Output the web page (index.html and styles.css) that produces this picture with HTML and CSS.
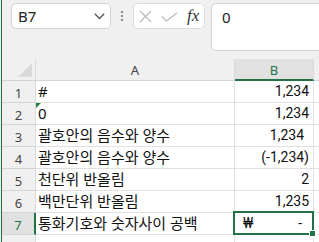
FILE: index.html
```html
<!DOCTYPE html>
<html lang="ko">
<head>
<meta charset="utf-8">
<link rel="stylesheet" href="styles.css">
</head>
<body>
<div class="frame">
  <div class="toolbar">
    <div class="namebox">
      <span class="ref">B7</span>
      <svg class="chev" width="11" height="7" viewBox="0 0 11 7"><polyline points="0.8,0.8 5.5,5.5 10.2,0.8" fill="none" stroke="#505050" stroke-width="1.3"/></svg>
    </div>
    <div class="dots"><i></i><i></i><i></i></div>
    <div class="fbtns">
      <svg class="xic" width="13" height="13" viewBox="0 0 13 13"><path d="M1 1L12 12M12 1L1 12" stroke="#b9b9b9" stroke-width="1.2" fill="none"/></svg>
      <svg class="ok" width="17" height="10" viewBox="0 0 17 10"><polyline points="0.8,4.5 5.5,9 16.2,0.8" fill="none" stroke="#b9b9b9" stroke-width="1.2"/></svg>
      <span class="fx">fx</span>
    </div>
    <div class="finput">0</div>
  </div>
  <div class="sheet">
    <div class="corner"><span class="tri"></span></div>
    <div class="colh">A</div>
    <div class="colh sel">B</div>
    <div class="colh"></div>

    <div class="rowh">1</div><div class="c">#</div><div class="c num">1,234</div><div class="c"></div>
    <div class="rowh">2</div><div class="c err">0</div><div class="c num">1,234</div><div class="c"></div>
    <div class="rowh">3</div><div class="c">괄호안의 음수와 양수</div><div class="c num pad">1,234</div><div class="c"></div>
    <div class="rowh">4</div><div class="c">괄호안의 음수와 양수</div><div class="c num">(-1,234)</div><div class="c"></div>
    <div class="rowh">5</div><div class="c">천단위 반올림</div><div class="c num">2</div><div class="c"></div>
    <div class="rowh">6</div><div class="c">백만단위 반올림</div><div class="c num">1,235</div><div class="c"></div>
    <div class="rowh sel">7</div><div class="c">통화기호와 숫자사이 공백</div><div class="c acct active"><span>₩</span><span class="dash">-</span><i class="handle"></i></div><div class="c"></div>
    <div class="rowh"></div><div class="c"></div><div class="c"></div><div class="c"></div>
  </div>
</div>
</body>
</html>
```

FILE: styles.css
```css
html, body {
  margin: 0;
  padding: 0;
}
body {
  width: 319px;
  height: 242px;
  overflow: hidden;
  background: #f0f0f0;
  font-family: "Noto Sans", "Noto Sans CJK KR", sans-serif;
}
.frame {
  margin-left: 1px;
  border-left: 1px solid #1f6e43;
  height: 242px;
  overflow: hidden;
}
.toolbar {
  height: 59px;
  display: flex;
  align-items: flex-start;
  padding: 3px 0 0 9px;
  box-sizing: border-box;
}
.namebox {
  width: 100px;
  height: 26px;
  box-sizing: border-box;
  background: #fff;
  border: 1px solid #d3d3d3;
  border-radius: 5px;
  display: flex;
  align-items: center;
  justify-content: space-between;
  padding: 0 5px 0 6px;
  flex: none;
}
.ref {
  font-size: 15px;
  color: #222;
  line-height: 1;
}
.chev {
  margin-top: 1px;
}
.dots {
  flex: none;
  width: 3px;
  margin: 8px 0 0 10px;
  display: flex;
  flex-direction: column;
  gap: 2px;
}
.dots i {
  display: block;
  width: 2px;
  height: 2px;
  background: #8a8a8a;
}
.fbtns {
  flex: none;
  width: 72px;
  height: 26px;
  margin-left: 9px;
  box-sizing: border-box;
  background: #fff;
  border: 1px solid #dcdcdc;
  border-radius: 5px;
  display: flex;
  align-items: center;
  padding-left: 5px;
}
.xic { margin-top: 1px; }
.ok { margin-left: 9px; margin-top: 1px; }
.fx {
  margin-left: 9px;
  font-family: "Liberation Serif", "DejaVu Serif", serif;
  font-style: italic;
  font-size: 17px;
  color: #333;
  line-height: 1;
  margin-top: -2px;
}
.finput {
  flex: none;
  width: 140px;
  height: 48px;
  margin-left: 6px;
  box-sizing: border-box;
  background: #fff;
  border: 1px solid #d3d3d3;
  border-radius: 5px;
  font-size: 15px;
  color: #222;
  padding: 4px 0 0 10px;
  line-height: 18px;
}
.sheet {
  display: grid;
  grid-template-columns: 34px 199px 79px 40px;
  grid-auto-rows: 22px;
  background: #fff;
}
.corner, .colh, .rowh {
  background: #f0f0f0;
  box-sizing: border-box;
  border-right: 1px solid #dadada;
  border-bottom: 1px solid #d4d4d4;
  color: #444;
}
.corner {
  position: relative;
}
.tri {
  position: absolute;
  right: 3px;
  bottom: 3px;
  width: 0;
  height: 0;
  border-left: 14px solid transparent;
  border-bottom: 14px solid #d9d9d9;
}
.colh {
  font-family: "Noto Sans", sans-serif;
  font-size: 13px;
  display: flex;
  align-items: center;
  justify-content: center;
  padding-top: 1px;
}
.colh.sel {
  background: #e1e1e1;
  color: #217346;
  border-bottom: 2px solid #217346;
}
.rowh {
  font-family: "Noto Sans", sans-serif;
  font-size: 13px;
  display: flex;
  align-items: center;
  justify-content: center;
  padding-top: 2px;
}
.rowh.sel {
  background: #e1e1e1;
  color: #217346;
  border-right: 2px solid #217346;
}
.c {
  box-sizing: border-box;
  border-right: 1px solid #e1e1e1;
  border-bottom: 1px solid #e1e1e1;
  font-size: 15px;
  color: #111;
  display: flex;
  align-items: flex-end;
  padding: 0 0 1px 2px;
  line-height: 19px;
  white-space: nowrap;
  position: relative;
}
.num {
  justify-content: flex-end;
  font-family: "Roboto", sans-serif;
  font-size: 14px;
  padding: 0 4px 1px 0;
}
.num.pad {
  padding-right: 9px;
}
.err::before {
  content: "";
  position: absolute;
  left: 0;
  top: 0;
  border-top: 5px solid #1e7b3e;
  border-right: 5px solid transparent;
}
.acct {
  justify-content: space-between;
  font-family: "Roboto", sans-serif;
  font-size: 14px;
  padding: 0 11px 1px 8px;
}
.active::after {
  content: "";
  position: absolute;
  left: -2px;
  top: -2px;
  right: -1px;
  bottom: -1px;
  border: 2px solid #217346;
  pointer-events: none;
}
.handle {
  position: absolute;
  right: -3px;
  bottom: -3px;
  width: 5px;
  height: 5px;
  background: #217346;
  border: 1px solid #fff;
  z-index: 2;
}
```
